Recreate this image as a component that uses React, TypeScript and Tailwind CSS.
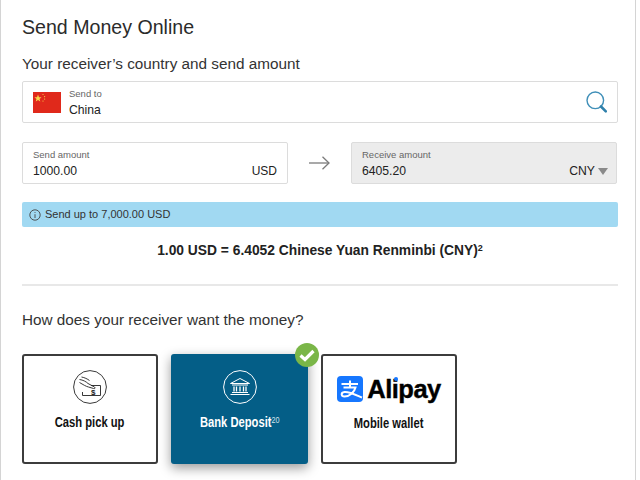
const sans = "font-['Liberation_Sans',Arial,sans-serif]";

function Flag() {
  return (
    <svg width="28" height="21" viewBox="0 0 28 21" className="shrink-0">
      <rect width="28" height="21" fill="#e0291b" />
      <polygon points="5,2.5 6,5.2 8.6,5.2 6.5,6.9 7.3,9.5 5,7.9 2.7,9.5 3.5,6.9 1.4,5.2 4,5.2" fill="#f7d64a" />
      <circle cx="10" cy="2.5" r="0.6" fill="#f7d64a" />
      <circle cx="11.6" cy="4.6" r="0.6" fill="#f7d64a" />
      <circle cx="11.6" cy="7" r="0.6" fill="#f7d64a" />
      <circle cx="10" cy="9" r="0.6" fill="#f7d64a" />
    </svg>
  );
}

function SearchIcon() {
  return (
    <svg width="21" height="22" viewBox="0 0 21 22" fill="none">
      <circle cx="9.3" cy="9.3" r="8.3" stroke="#3f8fb8" strokeWidth="1.4" />
      <path d="M15 15.5 L19.8 20.3" stroke="#2f80ab" strokeWidth="2.6" strokeLinecap="round" />
    </svg>
  );
}

function ArrowIcon() {
  return (
    <svg width="21" height="14" viewBox="0 0 21 14" fill="none" stroke="#7b7b7b" strokeWidth="1.3">
      <path d="M0 7 H20" />
      <path d="M13.5 0.8 L20 7 L13.5 13.2" />
    </svg>
  );
}

function InfoIcon() {
  return (
    <svg width="12" height="12" viewBox="0 0 12 12" fill="none" stroke="#444" strokeWidth="0.9">
      <circle cx="6" cy="6" r="5.2" />
      <path d="M6 5.2 V9" />
      <path d="M6 3 V3.9" />
    </svg>
  );
}

function CashIcon() {
  return (
    <svg width="34" height="34" viewBox="0 0 34 34" fill="none" stroke="#222" strokeWidth="0.9">
      <circle cx="17" cy="17" r="16.4" />
      <path d="M9.5 22 V25.5 H27.5 V15.5 H18" />
      <path d="M6.5 9.5 C10 10 13 11.5 15 13.5 L21.5 17 C22.5 18 22 19 20.5 18.5 L15.5 17 C13 16.5 10 14.5 6.5 12.5" />
      <path d="M8.5 7 C11.5 7.5 14.5 9 16.5 10.5" />
      <text x="18" y="24.5" fontSize="8" fontWeight="700" fill="#222" stroke="none" fontFamily="Liberation Sans">$</text>
    </svg>
  );
}

function BankIcon() {
  return (
    <svg width="34" height="34" viewBox="0 0 34 34" fill="none" stroke="#fff" strokeWidth="1">
      <circle cx="17" cy="17" r="16.4" />
      <path d="M17 8.5 L26.5 13.5 H7.5 Z" />
      <path d="M9 15 H25 M9 22.5 H25 M7.5 24.5 H26.5" />
      <path d="M11 16.5 V21.5 M13.5 16.5 V21.5 M17 16.5 V21.5 M20.5 16.5 V21.5 M23 16.5 V21.5" strokeWidth="1.3" />
    </svg>
  );
}

function AlipayMark() {
  return (
    <svg width="26" height="26" viewBox="0 0 26 26" className="shrink-0">
      <rect width="26" height="26" rx="4" fill="#1677ff" />
      <path
        d="M4.5 8 H21 M13 4.5 V11.5 M6.5 11.5 H18.5 C17.5 16 12.5 20.5 7.5 20.5 C4 20.5 3.5 16.5 7.5 16 C12 15.5 18 18.5 25 21.5"
        fill="none"
        stroke="#fff"
        strokeWidth="2"
      />
    </svg>
  );
}

function CheckBadge() {
  return (
    <div className="absolute -top-[11px] -right-[11px] w-6 h-6 rounded-full bg-[#7ab648] flex items-center justify-center">
      <svg width="16" height="13" viewBox="0 0 16 13" fill="none" stroke="#fff" strokeWidth="3.2">
        <path d="M1.5 6.5 L6 10.5 L14.5 2" />
      </svg>
    </div>
  );
}

function Card(props: { children: React.ReactNode; label: string }) {
  return (
    <div className="w-[136px] h-[110px] bg-white border-2 border-[#3c3c3c] rounded-[3px] flex flex-col items-center pt-[14px]">
      {props.children}
      <div className="mt-[10px] text-[14px] leading-[16px] font-bold text-[#111] scale-x-[0.8]">{props.label}</div>
    </div>
  );
}

export default function App() {
  return (
    <div className={`${sans} w-[640px] h-[480px] overflow-hidden bg-white`}>
      <div className="w-[636px] h-[480px] border-l border-r border-[#d4d4d4] pl-[21px] pr-[17px] text-[#222]">
        <h1 className="pt-[15px] text-[19.6px] leading-[24px] text-[#2b2b2b]">Send Money Online</h1>
        <h2 className="mt-[13px] text-[15.3px] leading-[24px] text-[#333]">Your receiver’s country and send amount</h2>

        <div className="mt-[5px] h-[42px] border border-[#dcdcdc] rounded-[2px] flex items-center pl-[10px] pr-[10px]">
          <Flag />
          <div className="ml-[8px] flex-1 pt-[1px]">
            <div className="text-[9.5px] leading-[12px] text-[#666]">Send to</div>
            <div className="mt-[2px] text-[12.2px] leading-[16px] text-[#222]">China</div>
          </div>
          <SearchIcon />
        </div>

        <div className="mt-[19px] flex items-center">
          <div className="w-[266px] h-[42px] border border-[#dcdcdc] rounded-[2px] px-[10px] pt-[6px]">
            <div className="text-[9.5px] leading-[12px] text-[#666]">Send amount</div>
            <div className="mt-[2px] flex justify-between text-[12.2px] leading-[16px]">
              <span>1000.00</span>
              <span className="text-[12px]">USD</span>
            </div>
          </div>
          <div className="w-[63px] flex justify-center">
            <ArrowIcon />
          </div>
          <div className="w-[266px] h-[42px] bg-[#ececec] border border-[#dcdcdc] rounded-[2px] pl-[10px] pr-[8px] pt-[6px]">
            <div className="text-[9.5px] leading-[12px] text-[#666]">Receive amount</div>
            <div className="mt-[2px] flex justify-between items-center text-[12.2px] leading-[16px]">
              <span>6405.20</span>
              <span className="flex items-center gap-[3px] text-[12.2px]">
                CNY
                <span className="w-0 h-0 border-l-[5px] border-r-[5px] border-t-[7px] border-l-transparent border-r-transparent border-t-[#8a8a8a]" />
              </span>
            </div>
          </div>
        </div>

        <div className="mt-[18px] h-[25px] bg-[#a1d9f2] rounded-[2px] flex items-center pl-[7px] gap-[4px] text-[11px] text-[#333]">
          <InfoIcon />
          <span className="-mt-[1px]">Send up to 7,000.00 USD</span>
        </div>

        <div className="mt-[14px] text-center text-[13.8px] leading-[20px] font-bold text-[#222]">
          1.00 USD = 6.4052 Chinese Yuan Renminbi (CNY)<sup className="text-[9px]">2</sup>
        </div>

        <hr className="mt-[23px] border-0 border-t-2 border-[#e8e8e8]" />

        <h2 className="mt-[22px] text-[15.3px] leading-[24px] text-[#333]">How does your receiver want the money?</h2>

        <div className="mt-[22px] flex gap-[13px]">
          <Card label="Cash pick up">
            <CashIcon />
          </Card>
          <div className="relative w-[137px] h-[110px] bg-[#045e87] rounded-[3px] flex flex-col items-center pt-[16px] shadow-[0_4px_12px_rgba(0,0,0,0.4)]">
            <BankIcon />
            <div className="mt-[10px] text-[14px] leading-[16px] font-bold text-white scale-x-[0.8]">
              Bank Deposit<sup className="text-[9px] font-normal text-[#d5e3ec]">20</sup>
            </div>
            <CheckBadge />
          </div>
          <div className="w-[136px] h-[110px] bg-white border-2 border-[#3c3c3c] rounded-[3px] flex flex-col items-center pt-[19px]">
            <div className="flex items-center gap-[4px]">
              <AlipayMark />
              <span className="relative text-[25.5px] leading-[28px] font-bold text-black tracking-[-0.5px] [-webkit-text-stroke:0.4px_black]">
                Alipay
                <span className="absolute left-[27px] top-[2px] w-[4px] h-[4px] rounded-full bg-[#1677ff]" />
              </span>
            </div>
            <div className="mt-[12px] text-[14px] leading-[16px] font-bold text-[#111] scale-x-[0.8]">Mobile wallet</div>
          </div>
        </div>
      </div>
    </div>
  );
}
